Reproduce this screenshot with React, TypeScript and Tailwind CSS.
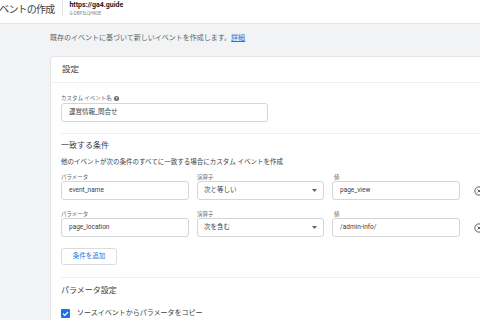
import React from "react";
import { CircleX } from "lucide-react";

const font = { fontFamily: "Roboto, 'Noto Sans CJK JP', sans-serif" };

const FieldLabel = ({ text, className = "" }: { text: string; className?: string }) => (
  <p className={`text-[5.5px] leading-[8px] text-[#5f6368] ${className}`}>{text}</p>
);

const TextBox = ({ value, width }: { value: string; width: string }) => (
  <div
    className={`${width} h-[19px] border border-[#d3d5d8] rounded-[3px] flex items-center pl-[7px] text-[6.5px] text-[#3c4043]`}
  >
    {value}
  </div>
);

const SelectBox = ({ value }: { value: string }) => (
  <div className="w-[127px] h-[19px] border border-[#d3d5d8] rounded-[3px] flex items-center pl-[6px] pr-[6px] text-[6.5px] text-[#3c4043]">
    <span className="flex-1">{value}</span>
    <svg width="5" height="3" viewBox="0 0 5 3">
      <path d="M0 0h5L2.5 3z" fill="#5f6368" />
    </svg>
  </div>
);

const ConditionRow = ({
  param,
  op,
  value,
  className = "",
}: {
  param: string;
  op: string;
  value: string;
  className?: string;
}) => (
  <div className={`flex gap-[8px] ${className}`}>
    <div>
      <FieldLabel text="パラメータ" />
      <TextBox value={param} width="w-[128px]" />
    </div>
    <div>
      <FieldLabel text="演算子" />
      <SelectBox value={op} />
    </div>
    <div>
      <FieldLabel text="値" className="pl-[2px]" />
      <TextBox value={value} width="w-[128px]" />
    </div>
    <div className="pt-[8px] pl-[6px]">
      <div className="h-[19px] flex items-center">
        <CircleX size={10} strokeWidth={2} color="#3c4043" />
      </div>
    </div>
  </div>
);

const App = () => {
  return (
    <div style={font} className="w-[480px] h-[320px] overflow-hidden bg-[#f1f3f4] text-[#3c4043]">
      <header className="h-[24px] bg-white border-b border-[#e3e5e8] flex items-start">
        <h1 className="-ml-[10px] mt-[3px] text-[10px] tracking-[-0.8px] leading-[13px] text-[#3c4043] whitespace-nowrap">
          イベントの作成
        </h1>
        <div className="ml-[8px] w-px h-[16px] bg-[#e0e2e5]" />
        <div className="ml-[6px] pt-[1px]">
          <p className="text-[7px] leading-[8px] font-bold text-[#202124]">https://ga4.guide</p>
          <p className="mt-[1px] text-[4.5px] leading-[8px] text-[#80868b]">G-DBP3LQHK0E</p>
        </div>
      </header>

      <main className="pl-[50px] pt-[10px]">
        <p className="text-[7px] leading-[8px] text-[#5f6368] whitespace-nowrap">
          既存のイベントに基づいて新しいイベントを作成します。
          <span className="text-[#1a73e8] underline">詳細</span>
        </p>

        <section className="mt-[14px] w-[500px] h-[300px] bg-white border border-[#e3e5e8] rounded-[4px]">
          <div className="h-[26px] flex items-center px-[11px] border-b border-[#eceef0] text-[8.5px] text-[#3c4043]">
            設定
          </div>

          <div className="px-[10px]">
            <p className="mt-[11px] text-[5.5px] leading-[8px] text-[#5f6368] flex items-center gap-[2px]">
              カスタム イベント名
              <span className="w-[5px] h-[5px] rounded-full bg-[#5f6368] text-white text-[4px] leading-[5px] text-center font-bold">
                ?
              </span>
            </p>
            <div className="mt-[1px]">
              <TextBox value="運営情報_問合せ" width="w-[207px]" />
            </div>

            <div className="mt-[11px] h-px bg-[#eceef0]" />

            <h2 className="mt-[7px] text-[8px] leading-[10px] text-[#3c4043]">一致する条件</h2>
            <p className="mt-[7px] text-[6.5px] leading-[8px] text-[#3c4043] whitespace-nowrap">
              他のイベントが次の条件のすべてに一致する場合にカスタム イベントを作成
            </p>

            <ConditionRow param="event_name" op="次と等しい" value="page_view" className="mt-[7px]" />
            <ConditionRow param="page_location" op="次を含む" value="/admin-info/" className="mt-[10px]" />

            <button className="mt-[11px] w-[56px] h-[17px] border border-[#dadce0] rounded-[3px] text-[6.5px] text-[#1a73e8] bg-white">
              条件を追加
            </button>

            <div className="mt-[12px] h-px bg-[#eceef0]" />

            <h2 className="mt-[8px] text-[8px] leading-[10px] text-[#3c4043]">パラメータ設定</h2>

            <div className="mt-[13px] flex items-center gap-[7px]">
              <svg width="9" height="9" viewBox="0 0 9 9">
                <rect width="9" height="9" rx="1" fill="#1a73e8" />
                <path d="M2 4.6l1.7 1.7L7 3" stroke="#fff" strokeWidth="1.2" fill="none" />
              </svg>
              <span className="text-[7px] leading-[9px] text-[#3c4043]">
                ソースイベントからパラメータをコピー
              </span>
            </div>
          </div>
        </section>
      </main>
    </div>
  );
};

export default App;
